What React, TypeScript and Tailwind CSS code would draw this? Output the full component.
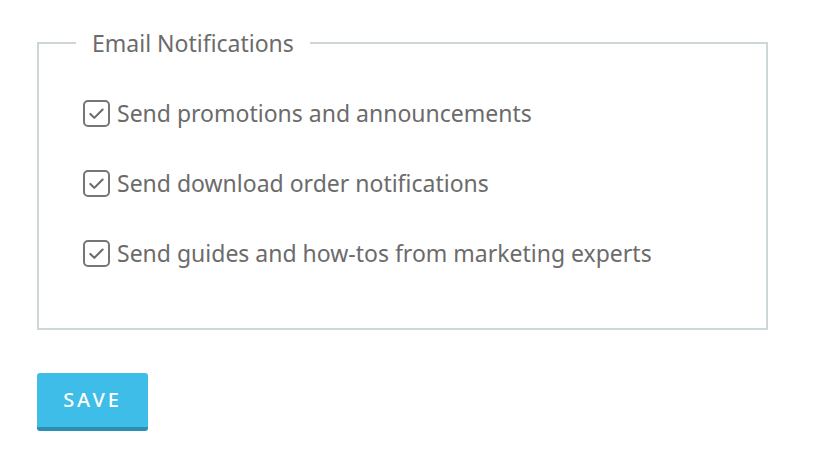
import React, { useState } from 'react';

const options = [
    { id: 'promo', label: 'Send promotions and announcements' },
    { id: 'orders', label: 'Send download order notifications' },
    { id: 'guides', label: 'Send guides and how-tos from marketing experts' },
];

const CheckBox: React.FC<{ checked: boolean; onClick: () => void }> = ({ checked, onClick }) => (
    <span
        onClick={onClick}
        className="flex h-[27px] w-[27px] shrink-0 cursor-pointer items-center justify-center rounded-[5px] border-2 border-[#767676] bg-white"
    >
        {checked && (
            <svg viewBox="0 0 24 24" className="h-[21px] w-[21px]" fill="none" stroke="#6b6b6b" strokeWidth={2.4} strokeLinecap="round" strokeLinejoin="round">
                <path d="M5 12.5l4.5 4.5L19 7.5" />
            </svg>
        )}
    </span>
);

export default function App() {
    const [checked, setChecked] = useState<Record<string, boolean>>({ promo: true, orders: true, guides: true });

    return (
        <div className="min-h-screen bg-white px-[37px] pt-[28px] font-['Noto_Sans',sans-serif] text-[#666666]">
            <fieldset className="h-[302px] w-[731px] border-2 border-[#cdd7d9] pl-[44px] pt-[39px]">
                <legend className="-ml-[7px] px-[16px] text-[23px] leading-[30px] text-[#6b6b6b]">Email Notifications</legend>
                <div className="flex flex-col gap-[38px]">
                    {options.map(opt => (
                        <label key={opt.id} className="flex h-[32px] items-center gap-[7px] text-[23px] text-[#6b6b6b]">
                            <CheckBox
                                checked={checked[opt.id]}
                                onClick={() => setChecked(prev => ({ ...prev, [opt.id]: !prev[opt.id] }))}
                            />
                            <span>{opt.label}</span>
                        </label>
                    ))}
                </div>
            </fieldset>
            <button className="mt-[43px] h-[58px] w-[111px] rounded-[3px] border-b-[4px] border-[#2a8fb3] bg-[#3ebde8] text-[20px] font-medium tracking-[3px] text-white">
                SAVE
            </button>
        </div>
    );
}
